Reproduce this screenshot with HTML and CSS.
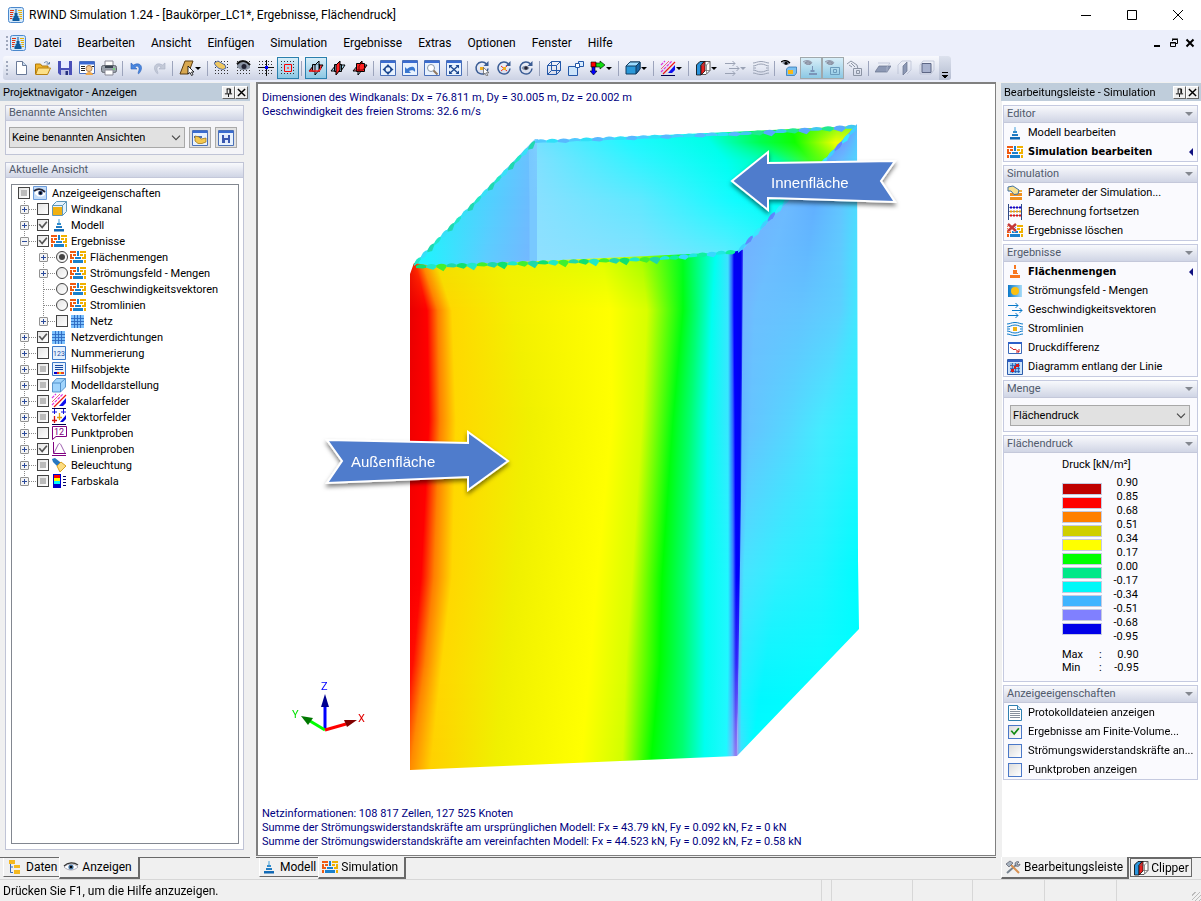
FILE: index.html
```
<!DOCTYPE html>
<html lang="de">
<head>
    <meta charset="UTF-8">
    <meta name="viewport" content="width=device-width, initial-scale=1.0">
    <title>RWIND Simulation 1.24</title>
    <link rel="stylesheet" href="styles.css">
</head>
<body>
    <!-- icon sprites -->
    <svg class="sprites" aria-hidden="true">
        <defs>
            <linearGradient id="gBlue" x1="0" y1="0" x2="0" y2="1"><stop offset="0" stop-color="#4aa8e0"/><stop offset="1" stop-color="#0b62b0"/></linearGradient>
            <linearGradient id="gFlow" x1="0" y1="0" x2="1" y2="0"><stop offset="0" stop-color="#0a78c8"/><stop offset="1" stop-color="#a8dcf8"/></linearGradient>
        </defs>
        <symbol id="app" viewBox="0 0 16 16"><rect x=".5" y=".5" width="15" height="15" rx="2" fill="#d4e8fa" stroke="#4a88cc"/><path d="M2 3.500h4M2 5.500h3.500M2 7.500h3M2 9.500h2.500M2 11.500h2" stroke="#e03010"/><path d="M10 3.500h4M10.500 5.500H14M11 7.500h3M11.500 9.500H14M12 11.500h2" stroke="#e8b000"/><path d="M7.500 2h1v4h1v3h1v2h1v3h-7v-3h1V9h1V6h1z" fill="#0f5a9c"/></symbol>
        <symbol id="model" viewBox="0 0 16 16"><path d="M7.500 2h1v4h-1zM6 6h4v2H6zM5 9h6v2H5zM3 12h10v2.500H3z" fill="url(#gBlue)"/></symbol>
        <symbol id="modelo" viewBox="0 0 16 16"><path d="M7 1h2v4H7zM6 6h4v3H6zM6 9h5v1H6zM3 11h10v3H3z" fill="#f87820"/></symbol>
        <symbol id="sim" viewBox="0 0 16 16"><path d="M0 2h6v2H0zM0 5h2v3H0zM3 5h3v2H3zM0 8h4v2H0zM0 11h2v3H0z" fill="#f05a10"/><path d="M10 2h6v2h-6zM10 5h3v2h-3zM14 5h2v3h-2zM12 8h4v2h-4zM14 11h2v3h-2z" fill="#f0b000"/><path d="M7 2h2v5H7zM5 8h6v2H5zM3 11h10v3H3z" fill="#1a80cc"/></symbol>
        <symbol id="new" viewBox="0 0 16 16"><path d="M3.500 1.500h6l4 4v9h-10z" fill="#fff" stroke="#6a7a98"/><path d="M9.500 1.500v4h4" fill="#c8dcf0" stroke="#6a7a98"/></symbol>
        <symbol id="open" viewBox="0 0 16 16"><path d="M.5 14V4h5l1.500 2h6v3" fill="#f0b428" stroke="#b07808"/><path d="M3 8h12.500l-3 6.500H.7z" fill="#fce088" stroke="#b88010"/><path d="M9 3c2-2 4-1.500 4.500 1m-2 0h3V2" fill="none" stroke="#6080a8"/></symbol>
        <symbol id="save" viewBox="0 0 16 16"><path d="M1 1h14v14H3l-2-2z" fill="#4a50b8"/><path d="M4 1h8v7H4z" fill="#e8ecff"/><path d="M4 10h8v5H4z" fill="#c0c4e8"/><path d="M8.500 11h2.500v4H8.500z" fill="#26307c"/></symbol>
        <symbol id="report" viewBox="0 0 16 16"><path d="M.5 1.500h15v12H.5z" fill="#fff" stroke="#4a70c0"/><path d="M1 2h14v2.500H1z" fill="#3a68d0"/><path d="M2 6.500h4M2 8.500h4M2 10.500h4M13 6.500h2" stroke="#222"/><circle cx="10" cy="8.500" r="3" fill="#f4c890" stroke="#b08050"/><path d="M6.500 15c0-4 7.500-4 7.500 0z" fill="#f0a848"/></symbol>
        <symbol id="print" viewBox="0 0 16 16"><path d="M4 6V1h8v5z" fill="#fff" stroke="#8a8a96"/><rect x=".5" y="5.500" width="15" height="7" rx="2" fill="#9aa2ac" stroke="#60666e"/><path d="M4 10h8v5H4z" fill="#fff" stroke="#8a8a96"/><path d="M4 6h8v2H4z" fill="#3a4450"/><path d="M12 9h2" stroke="#5f5"/></symbol>
        <symbol id="undo" viewBox="0 0 16 16"><path d="M2 3v6h6L5.800 7c2.500-2 6-.5 3.400 5.500-.5 1 .3 1.500 1 .8C15 8 12 1 4.400 5z" fill="#4a88e0" stroke="#2c60b8" stroke-width=".6"/></symbol>
        <symbol id="redo" viewBox="0 0 16 16"><path d="M14 3v6H8l2.200-2c-2.500-2-6-.5-3.400 5.500.5 1-.3 1.500-1 .8C1 8 4 1 11.600 5z" fill="#c4cad8" stroke="#a8b0c4" stroke-width=".6"/></symbol>
        <symbol id="pick" viewBox="0 0 16 16"><path d="M6 1h8l-5 13H1z" fill="#d8a850" stroke="#5a3c10"/><path d="M9 6v8l2-1.500 1.500 3 1.500-.8-1.500-2.700H15z" fill="#fff" stroke="#000" stroke-width=".8"/></symbol>
        <symbol id="dots" viewBox="0 0 16 16"><path d="M1 1.500h15M1 4.500h15M1 7.500h15M1 10.500h15M1 13.500h15" stroke="#333" stroke-dasharray="1 2"/></symbol>
        <symbol id="gridhand" viewBox="0 0 16 16"><use href="#dots"/><path d="M0 3l4-2 7 4 1 3-3 1.500-4-1L2 6z" fill="#f0c860" stroke="#3050a0" stroke-width=".8"/></symbol>
        <symbol id="grideye" viewBox="0 0 16 16"><use href="#dots"/><path d="M1 5c4-4 9-4 13 0v3l-4 2H5L1 7z" fill="#8a94a4"/><path d="M1 4c4-4 9-4 13 1" fill="none" stroke="#111" stroke-width="2"/><circle cx="8" cy="6.500" r="2.500" fill="#223"/></symbol>
        <symbol id="gridcross" viewBox="0 0 16 16"><use href="#dots"/><path d="M8.500 0v16M0 7.500h16" stroke="#111"/><path d="M7 6h3v3H7z" fill="#00f"/></symbol>
        <symbol id="gridsel" viewBox="0 0 16 16"><use href="#dots"/><path d="M3 3h10v10H3z" fill="#b8dcee"/><path d="M4.500 4.500h7v7h-7z" fill="#b8dcee" stroke="#f00"/><path d="M7 7h2v2H7z" fill="#f66"/></symbol>
        <symbol id="planeA" viewBox="0 0 16 16"><path d="M1 11l5-6h9l-4 6z" fill="#f44" stroke="#000"/><path d="M4.500 4.500h7v7h-7z" fill="#a8dcf4" fill-opacity=".8" stroke="#000"/><path d="M7 15V5l4-4v9z" fill="#a8dcf4" fill-opacity=".7" stroke="#000"/><path d="M1 11h10l2-3" fill="none" stroke="#f22" stroke-width="1.500"/></symbol>
        <symbol id="planeB" viewBox="0 0 16 16"><path d="M1 11l5-6h9l-4 6z" fill="#a8dcf4" stroke="#000"/><path d="M4.500 4.500h7v7h-7z" fill="#a8dcf4" fill-opacity=".7" stroke="#000"/><path d="M6 15V5l4-4v9z" fill="#f22" stroke="#000"/></symbol>
        <symbol id="planeC" viewBox="0 0 16 16"><path d="M1 11l5-6h9l-4 6z" fill="#a8dcf4" stroke="#000"/><path d="M6 15V5l4-4v9z" fill="#a8dcf4" stroke="#000"/><path d="M4.500 3.500h8v8h-8z" fill="#f22" stroke="#000"/><path d="M7 12V6l3-4M2 10h9l3-4" fill="none" stroke="#700"/></symbol>
        <symbol id="win" viewBox="0 0 16 16"><path d="M.5 .5h15v15H.5z" fill="#e8f2fe" stroke="#4a70b8"/><path d="M1 1h14v2H1z" fill="#3a6cd0"/></symbol>
        <symbol id="target" viewBox="0 0 16 16"><use href="#win"/><circle cx="8" cy="9.500" r="3" fill="none" stroke="#1c4890" stroke-width="1.300"/><path d="M8 4l2 2.500H6zM8 15l2-2.500H6zM2.500 9.500L5 7.500v4zM13.500 9.500L11 7.500v4z" fill="#1c4890"/></symbol>
        <symbol id="winundo" viewBox="0 0 16 16"><use href="#win"/><path d="M3 7v6h6l-2-2c2-1 5-1 6 1 1-5-3-7-8-3z" fill="#3a78d0"/></symbol>
        <symbol id="winzoom" viewBox="0 0 16 16"><use href="#win"/><circle cx="7" cy="8" r="3.500" fill="#fff" stroke="#8898a8"/><path d="M9.500 10.500l4 4" stroke="#907860" stroke-width="2"/></symbol>
        <symbol id="winfit" viewBox="0 0 16 16"><use href="#win"/><path d="M4 6l8 7M12 6l-8 7" stroke="#1c4890" stroke-width="1.300"/><path d="M3 5h3.500L3 8.500zM13 5H9.500L13 8.500zM3 14h3.500L3 10.500zM13 14H9.500l3.500-3.500z" fill="#1c4890"/></symbol>
        <symbol id="turn" viewBox="0 0 16 16"><path d="M12.500 4A6 6 0 1 0 14 8.500" fill="none" stroke="#3a5c94" stroke-width="1.500"/><path d="M14.500 1v5h-5z" fill="#3a5c94"/></symbol>
        <symbol id="turnpick" viewBox="0 0 16 16"><use href="#turn"/><path d="M6 7h4v3H6z" fill="#f0b020"/><path d="M9.500 7.500v7l1.600-1.300L12.500 16l1.300-.7-1.400-2.600H15z" fill="#fff" stroke="#555" stroke-width=".7"/></symbol>
        <symbol id="turnx" viewBox="0 0 16 16"><use href="#turn"/><path d="M5 6l6 5M11 6l-6 5" stroke="#f03020"/><path d="M7 7h3v3H7z" fill="#f0b020"/></symbol>
        <symbol id="turneye" viewBox="0 0 16 16"><use href="#turn"/><path d="M3.500 8c2-3 6-3 8 0-2 3-6 3-8 0z" fill="#8a96ac"/><circle cx="8" cy="8" r="1.800" fill="#223"/></symbol>
        <symbol id="wire" viewBox="0 0 16 16"><path d="M1.500 5.500h9v9h-9zM5.500 1.500h9v9h-9zM1.500 5.500l4-4M10.500 5.500l4-4M1.500 14.500l4-4M10.500 14.500l4-4" fill="none" stroke="#2458a8"/></symbol>
        <symbol id="cubes" viewBox="0 0 16 16"><path d="M.5 6.500h9v9h-9z" fill="#cce4fa" stroke="#2458a8"/><path d="M10.500 1.500h5v5h-5z" fill="#d8ecff" stroke="#2458a8"/><path d="M7.500 3.500h4v4h-4z" fill="#fff" stroke="#2458a8"/></symbol>
        <symbol id="axes" viewBox="0 0 16 16"><path d="M1 2h5v5H1z" fill="#f00" stroke="#000" stroke-width=".6"/><path d="M6 3h4V1l5 4-5 4V7H6z" fill="#1d1" stroke="#000" stroke-width=".6"/><path d="M2 7h3v4h2l-3.500 4L0 11h2z" fill="#00f" stroke="#000" stroke-width=".6"/></symbol>
        <symbol id="bcube" viewBox="0 0 16 16"><path d="M1 6l4-4h10v7l-4 5H1z" fill="#2a98d8" stroke="#123c60"/><path d="M1 6l4-4h10l-4 4z" fill="#9cdcff" stroke="#123c60"/><path d="M11 6l4-4v7l-4 5z" fill="#1868a8" stroke="#123c60"/></symbol>
        <symbol id="hatch" viewBox="0 0 16 16"><path d="M1 5l4-4M1 12L12 1" stroke="#e030e0" stroke-width="1.200" stroke-dasharray="3 1"/><path d="M3 14L15 2" stroke="#f01818" stroke-width="1.200"/><path d="M1 9l8-8" stroke="#f04060" stroke-width=".8"/><path d="M8 13l7-8v5l-3 3z" fill="#1010f0"/><path d="M1 15.500h14" stroke="#000050"/></symbol>
        <symbol id="clip" viewBox="0 0 16 16"><path d="M5 1.500h10v9l-4 4H1.500V5z" fill="#fff" stroke="#333" stroke-width=".8"/><path d="M1.500 5L5 1.500h4L6 5v10H1.500z" fill="#2a94dc" stroke="#111" stroke-width=".8"/><path d="M6 5l4-4v10l-4 4z" fill="#e82020" stroke="#111" stroke-width=".8"/><path d="M10 10.500h5M11.500 5v9M11.500 5L15 1.500M6 5h5.500" stroke="#666" stroke-width=".7" fill="none"/></symbol>
        <symbol id="vec" viewBox="0 0 16 16"><path d="M1 3.500h10M5 8.500h10M1 13.500h10M8.500 1l2.500 2.500L8.500 6M12.500 6L15 8.500 12.500 11M8.500 11l2.500 2.500L8.500 16" fill="none" stroke="currentColor"/></symbol>
        <symbol id="stream" viewBox="0 0 16 16"><path d="M0 3c3 0 4-1.500 8-1.500S13 3 16 3M0 6c3 0 4-2 8-2s5 2 8 2M0 10c3 0 4 2 8 2s5-2 8-2M0 13c3 0 4 1.500 8 1.500S13 13 16 13M0 8h3M13 8h3" fill="none" stroke="currentColor"/></symbol>
        <symbol id="streamc" viewBox="0 0 16 16"><use href="#stream"/><path d="M6 6h4v4H6z" fill="#f0b010"/></symbol>
        <symbol id="eyes" viewBox="0 0 16 16"><path d="M1 3c3-3 6-3 8 0L7 5H4z" fill="#8890a0"/><path d="M0 2c3-2 6-2 9 1" stroke="currentColor" stroke-width="1.300" fill="none"/><circle cx="5" cy="3.200" r="1.500" fill="currentColor"/></symbol>
        <symbol id="eyebox" viewBox="0 0 16 16"><use href="#eyes"/><path d="M5.500 9l2-2h8v6l-2 2.500h-8z" fill="#7cc0f0" stroke="#246cac" stroke-width=".7"/><path d="M7 10h5v4H7z" fill="#f8b818"/></symbol>
        <symbol id="eyemodel" viewBox="0 0 16 16"><use href="#eyes"/><path d="M9 6h1v4H9zM7.500 10h4v2h-4zM6 13h8v2H6z" fill="#7a94b8"/></symbol>
        <symbol id="eyesq" viewBox="0 0 16 16"><use href="#eyes"/><path d="M5.500 7.500h9v7h-9zM8.500 9.500h3v3h-3z" fill="none" stroke="#6c9cbc"/></symbol>
        <symbol id="handsq" viewBox="0 0 16 16"><path d="M0 4l4-3 6 4 1 4M2 5l3 2M4 3l4 4" fill="none" stroke="#8c94a4"/><path d="M6.500 8.500h8v7h-8zM9.500 10.500h3v3h-3z" fill="none" stroke="#8c94a4"/></symbol>
        <symbol id="flatz" viewBox="0 0 16 16"><path d="M0 12l4-6h12l-4 6z" fill="#8c98b4" stroke="#68728c" stroke-width=".7"/><path d="M3 3h12l-3 4v6" fill="none" stroke="#b4bcd0" stroke-width=".7"/></symbol>
        <symbol id="flatx" viewBox="0 0 16 16"><path d="M6 6l4-4v9l-4 4z" fill="#8c98b4" stroke="#68728c" stroke-width=".7"/><path d="M1 14V5l4-4h9v9l-4 4" fill="none" stroke="#b4bcd0" stroke-width=".7"/></symbol>
        <symbol id="flaty" viewBox="0 0 16 16"><path d="M3 3.500h9v9H3z" fill="#a8b2ce" stroke="#5c6684"/><path d="M1 14V5l3-4h11v9l-3 4z" fill="none" stroke="#b4bcd0" stroke-width=".7"/></symbol>
        <symbol id="eye" viewBox="0 0 16 16"><path d="M1.500 1.500h13v13h-13z" fill="#c4dcf8" stroke="#6c9cdc"/><path d="M3 7c3-3 7-3 10 0v3l-3 1.500H6L3 9z" fill="#fff"/><path d="M2 6c4-3 8-2 11 1" stroke="#223" stroke-width="1.800" fill="none"/><circle cx="8.500" cy="8" r="2.300" fill="#2c4880"/><circle cx="8.500" cy="8" r="1.200" fill="#000"/></symbol>
        <symbol id="eyetab" viewBox="0 0 16 16"><path d="M1 8c4-4 10-4 14 0-4 4-10 4-14 0z" fill="#fff" stroke="#99a" stroke-width=".8"/><path d="M1 7c4-4 10-4 14-1" stroke="#333" stroke-width="1.200" fill="none"/><circle cx="8" cy="8" r="2.600" fill="#4878a8"/><circle cx="8" cy="8" r="1.300" fill="#000"/></symbol>
        <symbol id="windbox" viewBox="0 0 16 16"><path d="M1.500 4.500l4-4h10v10l-4 4h-10z" fill="#e4f2fc" stroke="#6098b8"/><path d="M1.500 4.500h10v10M11.500 4.500l4-4" fill="none" stroke="#6098b8"/><path d="M2 6h9v8H2z" fill="#f0b010"/></symbol>
        <symbol id="mesh" viewBox="0 0 16 16"><path d="M1 2h13v13H1z" fill="#7cc0fc"/><path d="M4.500 2v13M7.500 2v13M10.500 2v13M1 5.500h13M1 8.500h13M1 11.500h13" stroke="#2c68c0" stroke-width=".9"/></symbol>
        <symbol id="num" viewBox="0 0 16 16"><path d="M1.500 1.500h13v13h-13z" fill="#e4f0fe" stroke="#3c78c8"/><text x="8" y="11" font-size="7" text-anchor="middle" fill="#1848a0">123</text></symbol>
        <symbol id="help" viewBox="0 0 16 16"><path d="M1.500 1.500h13v13h-13z" fill="#e4f0fe" stroke="#3c78c8"/><path d="M4 4.500h8M4 6.500h8M4 8.500h8" stroke="#1848a0"/><path d="M3 11h3v2H3z" fill="#00c"/><path d="M6 11h2v2H6z" fill="#e22"/><path d="M8 11h2v2H8z" fill="#fc0"/><path d="M10 11h3v2h-3z" fill="#e42"/></symbol>
        <symbol id="cube" viewBox="0 0 16 16"><path d="M1.500 6l4-4.500h9V10l-5 5h-8z" fill="#a0d4fc" stroke="#3c80c0" stroke-width=".8"/><path d="M1.500 6h8v9M9.500 6l5-4.500" fill="none" stroke="#3c80c0" stroke-width=".8"/></symbol>
        <symbol id="vfield" viewBox="0 0 16 16"><path d="M3.500 0v5M1 3h5M12.500 0v5M10 3h5" stroke="#1010e0"/><path d="M3.500 7v7M1 11.500h5" stroke="#d81010" stroke-width="1.300"/><path d="M8.500 4v7M6 8.500h5" stroke="#e0a010" stroke-width="1.300"/><path d="M9 13l6-7v4l-3 3z" fill="#0000e0"/><path d="M1 15.500h14" stroke="#000050"/></symbol>
        <symbol id="point" viewBox="0 0 16 16"><path d="M1.500 1.500h14v10H5l-3.500 3z" fill="#fff" stroke="#800080"/><text x="8" y="10" font-size="9" text-anchor="middle" fill="#800080">12</text></symbol>
        <symbol id="line" viewBox="0 0 16 16"><path d="M2.500 1v11.500H15M1 14.500h14" fill="none" stroke="#800080"/><path d="M3 12l4-8c1-2 2-2 3 0l4 8" fill="none" stroke="#a060b0"/></symbol>
        <symbol id="light" viewBox="0 0 16 16"><path d="M1 2l3-1 5 4 0 3-3 1-4-4z" fill="#2878c0"/><path d="M6 9l4-4 5 4-6 6z" fill="#fcdc80" stroke="#d8a020"/></symbol>
        <symbol id="scale" viewBox="0 0 16 16"><path d="M2 1h8v14H2z" fill="#00c"/><path d="M3 2h6v3H3z" fill="#f00"/><path d="M3 5h6v3H3z" fill="#ff0"/><path d="M3 8h6v3H3z" fill="#0ff"/><path d="M12 3.500h3M12 6.500h3M12 9.500h3M12 12.500h3" stroke="#00006c"/></symbol>
        <symbol id="param" viewBox="0 0 16 16"><path d="M3 8h12v3H3zM3 12h12v3H3z" fill="#f09020"/><path d="M10 5h5v2h-5z" fill="#f0b040"/><path d="M1 2l5-1 6 4-1 4-4 .5L4 6 1 6z" fill="#f8e090" stroke="#4070a0"/></symbol>
        <symbol id="abacus" viewBox="0 0 16 16"><path d="M1.500 0v16M14.500 0v16" stroke="#2c4888"/><path d="M2 3.500h12M2 7.500h12M2 11.500h12" stroke="#889"/><path d="M3 3.500h11" stroke="#10c" stroke-width="2" stroke-dasharray="2 1"/><path d="M3 7.500h11" stroke="#e8a010" stroke-width="2" stroke-dasharray="2 1"/><path d="M3 11.500h11" stroke="#d11" stroke-width="2" stroke-dasharray="2 1"/></symbol>
        <symbol id="del" viewBox="0 0 16 16"><use href="#sim"/><path d="M1 1l8 7M9 1L1 8" stroke="#fff" stroke-width="4"/><path d="M1 1l8 7M9 1L1 8" stroke="#c43838" stroke-width="2.500"/></symbol>
        <symbol id="flow" viewBox="0 0 16 16"><path d="M1 2h14v12H1z" fill="url(#gFlow)"/><circle cx="8" cy="8" r="4" fill="#fcc010"/></symbol>
        <symbol id="diff" viewBox="0 0 16 16"><path d="M1.500 2.500h13v11h-13z" fill="#fff" stroke="#3868b8"/><path d="M1 2h14v2H1z" fill="#2c60c8"/><path d="M3 7l3 2 1 1 1-1 4 3m0-3v3H9" fill="none" stroke="#d02020"/></symbol>
        <symbol id="diagram" viewBox="0 0 16 16"><path d="M.5 .5h15v15H.5z" fill="#cfe4fa" stroke="#2c5cac"/><path d="M1 1h14v2H1z" fill="#2c5cc8"/><path d="M3 4h10v10H3z" fill="#8cc0f0"/><path d="M5.500 4v10M8.500 4v10M11.500 4v10M3 6.500h10M3 9.500h10M3 12.500h10" stroke="#1c50a8" stroke-width=".7"/><path d="M4 10h3v3H4zM7 7h2v3H7zM9 5h3v3H9z" fill="#d81818"/></symbol>
        <symbol id="doc" viewBox="0 0 16 16"><path d="M1.500 .5h9l4 4v11h-13z" fill="#fff" stroke="#3080b0"/><path d="M10.500 .5v4h4" fill="#d0e8f8" stroke="#3080b0"/><path d="M3 4.500h6M3 6.500h10M3 8.500h10M3 10.500h10M3 12.500h10" stroke="#88909c"/></symbol>
        <symbol id="data" viewBox="0 0 16 16"><path d="M2 1h6v4H2zM7 6h6v3H7zM7 11h6v4H7z" fill="#f4b820"/><path d="M3.500 5v8.500H6M3.500 8H6" fill="none" stroke="#3868b8"/></symbol>
        <symbol id="tools" viewBox="0 0 16 16"><path d="M2 14l9-8" stroke="#788490" stroke-width="2"/><path d="M14 14L6 6" stroke="#d89050" stroke-width="2"/><path d="M1 5l4-3 3 2-4 4z" fill="#a8b4c0" stroke="#445" stroke-width=".6"/><path d="M10 5c0-2 2-3 4-2l-2 2 1 1 2-1c0 2-2 3-4 2z" fill="#a8b4c0" stroke="#445" stroke-width=".6"/></symbol>
        <symbol id="viewopen" viewBox="0 0 16 16"><use href="#win"/><path d="M2 6h8v2H2z" fill="#4a70b8"/><path d="M3 6l4 1 2 2 5-1v4l-4 1.500H6L3 11z" fill="#f4c850" stroke="#9a7010" stroke-width=".7"/></symbol>
        <symbol id="viewsave" viewBox="0 0 16 16"><use href="#win"/><path d="M4 5h8v8H4z" fill="#3a58b0"/><path d="M6 5h4v3H6zM7 10h3v3H7z" fill="#dfe8fc"/></symbol>
        <symbol id="chev" viewBox="0 0 10 6"><path d="M1 .7l4 4 4-4" fill="none" stroke="#444" stroke-width="1.100"/></symbol>
        <symbol id="pin" viewBox="0 0 10 10"><path d="M3 1h4M3.500 1v5M6.500 1v5M7.300 1v5M1 6.500h8M5 6.500V10" fill="none" stroke="#000"/></symbol>
        <symbol id="x" viewBox="0 0 10 10"><path d="M1 1l8 8M9 1L1 9" stroke="#000" stroke-width="1.600"/></symbol>
    </svg>

    <header class="titlebar">
        <svg class="icon"><use href="#app"/></svg>
        <span class="title">RWIND Simulation 1.24 - [Baukörper_LC1*, Ergebnisse, Flächendruck]</span>
        <div class="window-buttons">
            <button aria-label="Minimieren"><svg viewBox="0 0 12 12"><path d="M1 6.500h10" stroke="#000"/></svg></button>
            <button aria-label="Maximieren"><svg viewBox="0 0 12 12"><path d="M1.500 1.500h9v9h-9z" fill="none" stroke="#000"/></svg></button>
            <button aria-label="Schließen"><svg viewBox="0 0 12 12"><path d="M1 1l10 10M11 1L1 11" stroke="#000"/></svg></button>
        </div>
    </header>

    <nav class="menubar">
        <span class="grip"></span>
        <svg class="icon"><use href="#app"/></svg>
        <a href="#">Datei</a>
        <a href="#">Bearbeiten</a>
        <a href="#">Ansicht</a>
        <a href="#">Einfügen</a>
        <a href="#">Simulation</a>
        <a href="#">Ergebnisse</a>
        <a href="#">Extras</a>
        <a href="#">Optionen</a>
        <a href="#">Fenster</a>
        <a href="#">Hilfe</a>
        <div class="mdi-buttons">
            <button aria-label="Minimieren"><svg viewBox="0 0 10 10"><path d="M1 8h6" stroke="#000" stroke-width="2"/></svg></button>
            <button aria-label="Wiederherstellen"><svg viewBox="0 0 10 10"><path d="M3.500 3V1.500h5v4H7M1.500 4.500h5v4h-5zM1 5h6M3 1h6" fill="none" stroke="#000"/></svg></button>
            <button aria-label="Schließen"><svg viewBox="0 0 10 10"><path d="M1.500 1.500l7 7M8.500 1.500l-7 7" stroke="#000" stroke-width="2"/></svg></button>
        </div>
    </nav>

    <div class="toolbar-row">
        <div class="toolbar">
            <span class="grip"></span>
            <button aria-label="Neu"><svg class="icon"><use href="#new"/></svg></button>
            <button aria-label="Öffnen"><svg class="icon"><use href="#open"/></svg></button>
            <button aria-label="Speichern"><svg class="icon"><use href="#save"/></svg></button>
            <button aria-label="Protokoll"><svg class="icon"><use href="#report"/></svg></button>
            <button aria-label="Drucken"><svg class="icon"><use href="#print"/></svg></button>
            <span class="sep"></span>
            <button aria-label="Rückgängig"><svg class="icon"><use href="#undo"/></svg></button>
            <button aria-label="Wiederholen"><svg class="icon"><use href="#redo"/></svg></button>
            <span class="sep"></span>
            <button class="drop" aria-label="Auswahl"><svg class="icon"><use href="#pick"/></svg></button>
            <span class="sep"></span>
            <button aria-label="Raster bearbeiten"><svg class="icon"><use href="#gridhand"/></svg></button>
            <button aria-label="Raster anzeigen"><svg class="icon"><use href="#grideye"/></svg></button>
            <button aria-label="Fadenkreuz"><svg class="icon"><use href="#gridcross"/></svg></button>
            <button class="active" aria-label="Rasterfang"><svg class="icon"><use href="#gridsel"/></svg></button>
            <span class="sep"></span>
            <button class="active" aria-label="Ebene XY"><svg class="icon"><use href="#planeA"/></svg></button>
            <button aria-label="Ebene YZ"><svg class="icon"><use href="#planeB"/></svg></button>
            <button aria-label="Ebene XZ"><svg class="icon"><use href="#planeC"/></svg></button>
            <span class="sep"></span>
            <button aria-label="Zentrieren"><svg class="icon"><use href="#target"/></svg></button>
            <button aria-label="Vorige Ansicht"><svg class="icon"><use href="#winundo"/></svg></button>
            <button aria-label="Zoom"><svg class="icon"><use href="#winzoom"/></svg></button>
            <button aria-label="Alles zeigen"><svg class="icon"><use href="#winfit"/></svg></button>
            <span class="sep"></span>
            <button aria-label="Drehen um Punkt"><svg class="icon"><use href="#turnpick"/></svg></button>
            <button aria-label="Drehen um Mitte"><svg class="icon"><use href="#turnx"/></svg></button>
            <button aria-label="Drehen um Auge"><svg class="icon"><use href="#turneye"/></svg></button>
            <span class="sep"></span>
            <button aria-label="Drahtmodell"><svg class="icon"><use href="#wire"/></svg></button>
            <button aria-label="Perspektive"><svg class="icon"><use href="#cubes"/></svg></button>
            <button class="drop" aria-label="Achsen"><svg class="icon"><use href="#axes"/></svg></button>
            <span class="sep"></span>
            <button class="drop" aria-label="Volumenmodell"><svg class="icon"><use href="#bcube"/></svg></button>
            <span class="sep"></span>
            <button class="drop" aria-label="Skalarfelder"><svg class="icon"><use href="#hatch"/></svg></button>
            <span class="sep"></span>
            <button class="drop" aria-label="Clipper"><svg class="icon"><use href="#clip"/></svg></button>
            <button class="drop off" aria-label="Vektoren"><svg class="icon"><use href="#vec"/></svg></button>
            <button class="off" aria-label="Stromlinien"><svg class="icon"><use href="#stream"/></svg></button>
            <span class="sep"></span>
            <button aria-label="Windkanal"><svg class="icon"><use href="#eyebox"/></svg></button>
            <button class="active off" aria-label="Modell"><svg class="icon"><use href="#eyemodel"/></svg></button>
            <button class="active off" aria-label="Flächen"><svg class="icon"><use href="#eyesq"/></svg></button>
            <button class="off" aria-label="Bearbeiten"><svg class="icon"><use href="#handsq"/></svg></button>
            <span class="sep"></span>
            <button aria-label="Ansicht Z"><svg class="icon"><use href="#flatz"/></svg></button>
            <button aria-label="Ansicht X"><svg class="icon"><use href="#flatx"/></svg></button>
            <button aria-label="Ansicht Y"><svg class="icon"><use href="#flaty"/></svg></button>
            <button class="overflow" aria-label="Weitere Schaltflächen"></button>
        </div>
    </div>

    <main class="workspace">
        <aside class="navigator">
            <div class="panel-title">
                <h2>Projektnavigator - Anzeigen</h2>
                <button aria-label="Anheften"><svg><use href="#pin"/></svg></button>
                <button aria-label="Schließen"><svg><use href="#x"/></svg></button>
            </div>
            <section class="box">
                <h3>Benannte Ansichten</h3>
                <div class="named-views">
                    <div class="combo">
                        <select aria-label="Benannte Ansichten"><option>Keine benannten Ansichten</option></select>
                        <svg><use href="#chev"/></svg>
                    </div>
                    <button aria-label="Ansicht bearbeiten"><svg class="icon"><use href="#viewopen"/></svg></button>
                    <button aria-label="Ansicht speichern"><svg class="icon"><use href="#viewsave"/></svg></button>
                </div>
            </section>
            <section class="box fill">
                <h3>Aktuelle Ansicht</h3>
                <div class="tree">
                    <label class="node"><input type="checkbox" class="mixed"><svg class="icon"><use href="#eye"/></svg>Anzeigeeigenschaften</label>
                    <ul>
                        <li><div class="row"><button class="twig" aria-label="Aufklappen"></button><label class="node"><input type="checkbox"><svg class="icon"><use href="#windbox"/></svg>Windkanal</label></div></li>
                        <li><div class="row"><button class="twig" aria-label="Aufklappen"></button><label class="node"><input type="checkbox" checked><svg class="icon"><use href="#model"/></svg>Modell</label></div></li>
                        <li><div class="row"><button class="twig expanded" aria-label="Zuklappen"></button><label class="node"><input type="checkbox" checked><svg class="icon"><use href="#sim"/></svg>Ergebnisse</label></div>
                            <ul>
                                <li><div class="row"><button class="twig" aria-label="Aufklappen"></button><label class="node"><input type="radio" name="result" checked><svg class="icon"><use href="#sim"/></svg>Flächenmengen</label></div></li>
                                <li><div class="row"><button class="twig" aria-label="Aufklappen"></button><label class="node"><input type="radio" name="result"><svg class="icon"><use href="#sim"/></svg>Strömungsfeld - Mengen</label></div></li>
                                <li><div class="row"><span class="twig leaf"></span><label class="node"><input type="radio" name="result"><svg class="icon"><use href="#sim"/></svg>Geschwindigkeitsvektoren</label></div></li>
                                <li><div class="row"><span class="twig leaf"></span><label class="node"><input type="radio" name="result"><svg class="icon"><use href="#sim"/></svg>Stromlinien</label></div></li>
                                <li><div class="row"><button class="twig" aria-label="Aufklappen"></button><label class="node"><input type="checkbox"><svg class="icon"><use href="#mesh"/></svg>Netz</label></div></li>
                            </ul>
                        </li>
                        <li><div class="row"><button class="twig" aria-label="Aufklappen"></button><label class="node"><input type="checkbox" checked><svg class="icon"><use href="#mesh"/></svg>Netzverdichtungen</label></div></li>
                        <li><div class="row"><button class="twig" aria-label="Aufklappen"></button><label class="node"><input type="checkbox"><svg class="icon"><use href="#num"/></svg>Nummerierung</label></div></li>
                        <li><div class="row"><button class="twig" aria-label="Aufklappen"></button><label class="node"><input type="checkbox" class="mixed"><svg class="icon"><use href="#help"/></svg>Hilfsobjekte</label></div></li>
                        <li><div class="row"><button class="twig" aria-label="Aufklappen"></button><label class="node"><input type="checkbox" class="mixed"><svg class="icon"><use href="#cube"/></svg>Modelldarstellung</label></div></li>
                        <li><div class="row"><button class="twig" aria-label="Aufklappen"></button><label class="node"><input type="checkbox" class="mixed"><svg class="icon"><use href="#hatch"/></svg>Skalarfelder</label></div></li>
                        <li><div class="row"><button class="twig" aria-label="Aufklappen"></button><label class="node"><input type="checkbox" class="mixed"><svg class="icon"><use href="#vfield"/></svg>Vektorfelder</label></div></li>
                        <li><div class="row"><button class="twig" aria-label="Aufklappen"></button><label class="node"><input type="checkbox"><svg class="icon"><use href="#point"/></svg>Punktproben</label></div></li>
                        <li><div class="row"><button class="twig" aria-label="Aufklappen"></button><label class="node"><input type="checkbox" checked><svg class="icon"><use href="#line"/></svg>Linienproben</label></div></li>
                        <li><div class="row"><button class="twig" aria-label="Aufklappen"></button><label class="node"><input type="checkbox" class="mixed"><svg class="icon"><use href="#light"/></svg>Beleuchtung</label></div></li>
                        <li><div class="row"><button class="twig" aria-label="Aufklappen"></button><label class="node"><input type="checkbox" class="mixed"><svg class="icon"><use href="#scale"/></svg>Farbskala</label></div></li>
                    </ul>
                </div>
            </section>
            <div class="tabs">
                <button class="tab"><svg class="icon"><use href="#data"/></svg>Daten</button>
                <button class="tab current"><svg class="icon"><use href="#eyetab"/></svg>Anzeigen</button>
            </div>
        </aside>

        <section class="center">
            <div class="viewport">
                <p>Dimensionen des Windkanals: Dx = 76.811 m, Dy = 30.005 m, Dz = 20.002 m<br>Geschwindigkeit des freien Stroms: 32.6 m/s</p>
                <div class="scene">
                    <canvas id="building" width="712" height="680"></canvas>
                    <svg class="overlay" viewBox="270 110 712 680">
                        <defs>
                            <filter id="shadow" x="-10%" y="-20%" width="120%" height="150%"><feDropShadow dx="0" dy="3" stdDeviation="2" flood-color="#000" flood-opacity=".5"/></filter>
                        </defs>
                        <g class="callout" filter="url(#shadow)">
                            <path d="M732 181L768 152V163L895 161L881 181L895 202L768 198V210Z"/>
                            <path d="M508 461L468 432V443L327 440L342 461L327 483L468 477V490Z"/>
                        </g>
                        <g class="callout-text">
                            <text x="771" y="188">Innenfläche</text>
                            <text x="351" y="467">Außenfläche</text>
                        </g>
                        <g class="axis">
                            <path d="M325 730V704" stroke="#0000ff"/><path d="M325 694l4 13h-8z" fill="#000090"/>
                            <path d="M325 730L310 721" stroke="#00ff00"/><path d="M301 716l12 2-5 7z" fill="#007800"/>
                            <path d="M325 730L346 724" stroke="#ff0000"/><path d="M357 720l-13 0 3 7z" fill="#800000"/>
                            <text x="321" y="690" fill="#0000ff">Z</text>
                            <text x="292" y="718" fill="#00e000">Y</text>
                            <text x="358" y="722" fill="#e00000">X</text>
                        </g>
                    </svg>
                </div>
                <p>Netzinformationen: 108 817 Zellen, 127 525 Knoten<br>Summe der Strömungswiderstandskräfte am ursprünglichen Modell: Fx = 43.79 kN, Fy = 0.092 kN, Fz = 0 kN<br>Summe der Strömungswiderstandskräfte am vereinfachten Modell: Fx = 44.523 kN, Fy = 0.092 kN, Fz = 0.58 kN</p>
            </div>
            <div class="tabs">
                <button class="tab"><svg class="icon"><use href="#model"/></svg>Modell</button>
                <button class="tab current"><svg class="icon"><use href="#sim"/></svg>Simulation</button>
            </div>
        </section>

        <aside class="taskbar">
            <div class="panel-title">
                <h2>Bearbeitungsleiste - Simulation</h2>
                <button aria-label="Anheften"><svg><use href="#pin"/></svg></button>
                <button aria-label="Schließen"><svg><use href="#x"/></svg></button>
            </div>
            <div class="groups">
                <section class="group">
                    <h3>Editor</h3>
                    <a href="#"><svg class="icon"><use href="#model"/></svg>Modell bearbeiten</a>
                    <a href="#" class="selected"><svg class="icon"><use href="#sim"/></svg>Simulation bearbeiten</a>
                </section>
                <section class="group">
                    <h3>Simulation</h3>
                    <a href="#"><svg class="icon"><use href="#param"/></svg>Parameter der Simulation...</a>
                    <a href="#"><svg class="icon"><use href="#abacus"/></svg>Berechnung fortsetzen</a>
                    <a href="#"><svg class="icon"><use href="#del"/></svg>Ergebnisse löschen</a>
                </section>
                <section class="group">
                    <h3>Ergebnisse</h3>
                    <a href="#" class="selected"><svg class="icon"><use href="#modelo"/></svg>Flächenmengen</a>
                    <a href="#"><svg class="icon"><use href="#flow"/></svg>Strömungsfeld - Mengen</a>
                    <a href="#"><svg class="icon"><use href="#vec"/></svg>Geschwindigkeitsvektoren</a>
                    <a href="#"><svg class="icon"><use href="#streamc"/></svg>Stromlinien</a>
                    <a href="#"><svg class="icon"><use href="#diff"/></svg>Druckdifferenz</a>
                    <a href="#"><svg class="icon"><use href="#diagram"/></svg>Diagramm entlang der Linie</a>
                </section>
                <section class="group">
                    <h3>Menge</h3>
                    <div class="combo">
                        <select aria-label="Menge"><option>Flächendruck</option></select>
                        <svg><use href="#chev"/></svg>
                    </div>
                </section>
                <section class="group">
                    <h3>Flächendruck</h3>
                    <div class="legend">
                        <p>Druck [kN/m²]</p>
                        <div class="legend-scale">
                            <ul class="swatches">
                                <li class="c1"></li><li class="c2"></li><li class="c3"></li><li class="c4"></li><li class="c5"></li><li class="c6"></li>
                                <li class="c7"></li><li class="c8"></li><li class="c9"></li><li class="c10"></li><li class="c11"></li>
                            </ul>
                            <ul class="values">
                                <li>0.90</li><li>0.85</li><li>0.68</li><li>0.51</li><li>0.34</li><li>0.17</li>
                                <li>0.00</li><li>-0.17</li><li>-0.34</li><li>-0.51</li><li>-0.68</li><li>-0.95</li>
                            </ul>
                        </div>
                        <table>
                            <tr><th>Max</th><td>:</td><td>0.90</td></tr>
                            <tr><th>Min</th><td>:</td><td>-0.95</td></tr>
                        </table>
                    </div>
                </section>
                <section class="group">
                    <h3>Anzeigeeigenschaften</h3>
                    <a href="#"><svg class="icon"><use href="#doc"/></svg>Protokolldateien anzeigen</a>
                    <label><input type="checkbox" checked>Ergebnisse am Finite-Volume...</label>
                    <label><input type="checkbox">Strömungswiderstandskräfte an...</label>
                    <label><input type="checkbox">Punktproben anzeigen</label>
                </section>
            </div>
            <div class="tabs">
                <button class="tab current"><svg class="icon"><use href="#tools"/></svg>Bearbeitungsleiste</button>
                <button class="tab boxed"><svg class="icon"><use href="#clip"/></svg>Clipper</button>
            </div>
        </aside>
    </main>

    <footer class="statusbar">
        <span class="message">Drücken Sie F1, um die Hilfe anzuzeigen.</span>
        <span class="cell tiny"></span>
        <span class="cell"></span>
        <span class="cell small"></span>
        <span class="cell"></span>
        <span class="cell"></span>
        <span class="cell"></span>
    </footer>
    <script src="script.js"></script>
</body>
</html>
```
FILE: styles.css
```
* {
    box-sizing: border-box;
}

body {
    margin: 0;
    height: 100vh;
    display: flex;
    flex-direction: column;
    background-color: #f0f0f0;
    color: #000;
    font-family: Roboto, "DejaVu Sans Condensed", sans-serif;
    font-size: 11px;
    overflow: hidden;
}

h2, h3, p, ul {
    margin: 0;
    padding: 0;
    font-size: inherit;
    font-weight: normal;
    list-style: none;
}

a {
    color: inherit;
    text-decoration: none;
}

button {
    margin: 0;
    padding: 0;
    border: none;
    background: none;
    color: inherit;
    font: inherit;
    display: flex;
    align-items: center;
    justify-content: center;
}

.sprites {
    position: absolute;
    width: 0;
    height: 0;
}

.icon {
    width: 16px;
    height: 16px;
    flex: none;
}

.titlebar,
.menubar,
.tab,
.statusbar {
    font-size: 12px;
}

/* title and menu */
.titlebar {
    flex: none;
    height: 30px;
    padding-left: 8px;
    display: flex;
    align-items: center;
    gap: 5px;
    background-color: #fff;
}

.window-buttons {
    margin-left: auto;
    display: flex;
}

.window-buttons button {
    width: 46px;
    height: 30px;
}

.window-buttons svg {
    width: 12px;
    height: 12px;
}

.menubar {
    flex: none;
    height: 26px;
    padding: 0 6px;
    display: flex;
    align-items: center;
    background-color: #eceffb;
}

.menubar a {
    padding: 0 8px;
}

.grip {
    width: 2px;
    height: 15px;
    margin-right: 2px;
    background: repeating-linear-gradient(#a0a8bc 0 2px, transparent 2px 4px);
}

.mdi-buttons {
    margin-left: auto;
    display: flex;
    gap: 6px;
}

.mdi-buttons svg {
    width: 10px;
    height: 10px;
}

.toolbar-row {
    flex: none;
    height: 26px;
    padding: 0 0 2px 3px;
    display: flex;
    background-color: #eceffb;
}

.toolbar {
    height: 24px;
    padding-left: 3px;
    display: flex;
    align-items: center;
    border-radius: 3px;
    background: linear-gradient(#f8f9fd, #e4e8f3 50%, #ccd2e4);
}

.toolbar button {
    position: relative;
    width: 22px;
    height: 22px;
}

.toolbar button.active {
    border: 1px solid #2a7fae;
    background: linear-gradient(#d8eef8, #8cc8e4);
}

.toolbar .off {
    color: #9aa2b4;
}

.toolbar button.active.off {
    border-color: #a0a8ac;
}

.toolbar button.drop {
    width: 29px;
    justify-content: flex-start;
    padding-left: 3px;
}

.drop::after {
    content: "";
    border: 3px solid transparent;
    border-top-color: currentColor;
    border-bottom: none;
}

.sep {
    width: 1px;
    height: 15px;
    margin: 0 3px 0 2px;
    background-color: #9ca4bc;
}

.toolbar button.overflow {
    width: 12px;
    height: 24px;
    margin-left: 1px;
    border-radius: 0 3px 3px 0;
    background: linear-gradient(#dde2ee, #b4bcd0);
    align-items: flex-end;
    padding-bottom: 2px;
}

.overflow::after {
    content: "";
    width: 6px;
    height: 6px;
    background: linear-gradient(#000, #000) 0 0 / 6px 1px no-repeat, linear-gradient(#000, #000) 1px 4px / 4px 1px no-repeat, linear-gradient(#000, #000) 2px 5px / 2px 1px no-repeat, linear-gradient(#000, #000) 0 3px / 6px 1px no-repeat;
}

/* columns */
.workspace {
    flex: 1;
    min-height: 0;
    display: grid;
    grid-template-columns: 250px minmax(0, 1fr) 200px;
    column-gap: 6px;
}

.navigator,
.center,
.taskbar {
    min-height: 0;
    display: flex;
    flex-direction: column;
}

.center {
    margin-right: -1px;
}

.panel-title {
    flex: none;
    height: 18px;
    margin-top: 1px;
    padding: 0 2px 0 3px;
    display: flex;
    align-items: center;
    background-color: #bfcddb;
}

.panel-title h2 {
    flex: 1;
    white-space: nowrap;
}

.panel-title button {
    width: 13px;
    height: 13px;
    background-color: #f0f0f0;
    border: 1px solid;
    border-color: #fff #666 #666 #fff;
}

.panel-title svg {
    width: 9px;
    height: 9px;
}

.box {
    flex: none;
    margin: 4px 6px 0 5px;
    border: 1px solid #c0c4d6;
    background-color: #f5f5f8;
}

.box.fill {
    flex: 1;
    min-height: 0;
    margin: 7px 6px 7px 5px;
    display: flex;
    flex-direction: column;
    background-color: #fff;
}

.box h3,
.group h3 {
    height: 15px;
    padding-left: 3px;
    line-height: 14px;
    color: #505a6c;
    border-bottom: 1px solid #c4c8da;
    background: linear-gradient(#f8f9fc, #d0d5e5);
}

.named-views {
    display: flex;
    align-items: center;
    gap: 4px;
    padding: 6px;
    padding-left: 3px;
}

.named-views button {
    width: 22px;
    height: 21px;
    border: 1px solid #aaa;
    background-color: #e1e1e1;
}

.combo {
    position: relative;
    flex: 1;
}

.combo select {
    width: 100%;
    height: 21px;
    padding: 0 2px;
    appearance: none;
    border: 1px solid #a8a8a8;
    border-radius: 0;
    background-color: #e1e1e1;
    color: #000;
    font: inherit;
}

.combo svg {
    position: absolute;
    right: 4px;
    top: 8px;
    width: 10px;
    height: 6px;
}

/* tree */
.tree {
    flex: 1;
    margin: 6px 4px 5px 5px;
    padding: 0 6px;
    border: 1px solid #828790;
    background-color: #fff;
}

.node {
    height: 16px;
    display: flex;
    align-items: center;
    gap: 2px;
    white-space: nowrap;
}

.node .icon {
    margin-right: 2px;
}

.tree ul {
    margin-left: 2px;
    background: repeating-linear-gradient(#888 0 1px, transparent 1px 2px) 4px 0 / 1px calc(100% - 8px) no-repeat;
}

.tree ul ul {
    margin-left: 19px;
}

.row {
    height: 16px;
    display: flex;
    align-items: center;
    gap: 8px;
    background: repeating-linear-gradient(90deg, #888 0 1px, transparent 1px 2px) 5px 8px / 11px 1px no-repeat;
}

.tree button.twig {
    width: 9px;
    height: 9px;
    border: 1px solid #919191;
    border-radius: 1px;
    background: linear-gradient(#2b4a9b, #2b4a9b) 1px 3px / 5px 1px no-repeat, linear-gradient(#2b4a9b, #2b4a9b) 3px 1px / 1px 5px no-repeat, #f4f4f4;
}

.tree button.expanded {
    background: linear-gradient(#2b4a9b, #2b4a9b) 1px 3px / 5px 1px no-repeat, #f4f4f4;
}

.leaf {
    width: 9px;
}

input[type="checkbox"],
input[type="radio"] {
    appearance: none;
    flex: none;
    width: 12px;
    height: 12px;
    margin: 0;
    border: 1px solid #444;
    background: linear-gradient(135deg, #e4e4e4, #fff);
    display: grid;
    place-items: center;
}

input[type="radio"] {
    border-radius: 50%;
}

input[type="radio"]:checked::before {
    content: "";
    width: 6px;
    height: 6px;
    border-radius: 50%;
    background-color: #444;
}

input[type="checkbox"]:checked::before {
    content: "";
    width: 10px;
    height: 10px;
    background-color: #555;
    clip-path: polygon(5% 45%, 20% 38%, 40% 62%, 82% 12%, 95% 22%, 42% 88%);
}

input.mixed::before {
    content: "";
    width: 6px;
    height: 6px;
    background-color: #bbb;
}

/* tabs */
.tabs {
    flex: none;
    height: 22px;
    display: flex;
    align-items: flex-start;
    padding-left: 3px;
    border-top: 1px solid #696969;
}

.tab {
    height: 19px;
    padding: 0 2px 0 3px;
    gap: 3px;
    border-bottom: 1px solid #696969;
    border-left: 1px solid #fff;
}

.center .tab:first-child {
    padding-left: 1px;
}

.tab.current {
    height: 22px;
    margin-top: -1px;
    padding: 0 6px 1px 3px;
    border-right: 2px solid #696969;
    border-bottom: 2px solid #696969;
    background-color: #f0f0f0;
}

/* viewport */
.viewport {
    flex: 1;
    min-height: 0;
    margin-bottom: 1px;
    padding: 7px 6px 6px 4px;
    display: flex;
    flex-direction: column;
    justify-content: space-between;
    border: 1px solid #808080;
    border-left-width: 2px;
    border-top-width: 2px;
    background-color: #fff;
    color: #000080;
    line-height: 14px;
    white-space: nowrap;
}

.scene {
    align-self: center;
    display: grid;
    margin: -10px 0 16px;
}

.scene > * {
    grid-area: 1 / 1;
    width: 712px;
    height: 680px;
}

.overlay {
    overflow: visible;
}

.callout path {
    fill: #4f7ccc;
    stroke: #fff;
    stroke-width: 2px;
}

.callout-text {
    fill: #fff;
    font-family: "Liberation Sans", Arial, sans-serif;
    font-size: 15px;
}

.axis {
    font-size: 11px;
    stroke-width: 3px;
}

.axis text {
    stroke: none;
}

/* task pane */
.groups {
    flex: 1;
    min-height: 0;
    margin-left: 1px;
    padding: 4px 3px 0 1px;
    display: flex;
    flex-direction: column;
    gap: 3px;
    background-color: #fff;
}

.group {
    flex: none;
    border: 1px solid #c5cae0;
    background-color: #fafafe;
    white-space: nowrap;
}

.group h3 {
    height: 17px;
    display: flex;
    align-items: center;
    justify-content: space-between;
    padding-right: 4px;
}

.group h3::after {
    content: "";
    border: 4px solid transparent;
    border-top-color: #848890;
    border-bottom: none;
}

.group a,
.group label {
    height: 19px;
    padding-left: 3px;
    display: flex;
    align-items: center;
    gap: 5px;
    color: #000;
}

.group .icon {
    color: #0878c8;
}

.group .selected {
    font-family: "DejaVu Sans Condensed", "DejaVu Sans", sans-serif;
    font-weight: bold;
}

.selected::after {
    content: "";
    margin: 0 4px 0 auto;
    border: 4px solid transparent;
    border-right-color: #101080;
    border-left: none;
}

.group input[type="checkbox"] {
    width: 14px;
    height: 14px;
    margin: 0 1px;
    border-color: #4a78c8;
    background: linear-gradient(135deg, #dcdcdc, #fff);
}

.group input[type="checkbox"]:checked::before {
    background-color: #108a10;
}

.group .combo {
    margin: 7px 7px 5px 6px;
}

.legend {
    height: 228px;
    padding: 5px 0 0 58px;
}

.legend-scale {
    display: flex;
    margin-top: 5px;
    gap: 3px;
}

.swatches {
    width: 40px;
    padding-top: 7px;
    display: flex;
    flex-direction: column;
    gap: 2px;
}

.swatches li {
    height: 12px;
    border: 1px solid #c5cae0;
}

.c1 { background-color: #bf0000; }
.c2 { background-color: #ff0000; }
.c3 { background-color: #ff8000; }
.c4 { background-color: #cfcf00; }
.c5 { background-color: #ffff00; }
.c6 { background-color: #00ff00; }
.c7 { background-color: #00e888; }
.c8 { background-color: #00f8f8; }
.c9 { background-color: #40b4ff; }
.c10 { background-color: #8080ff; }
.c11 { background-color: #0000e8; }

.values {
    width: 33px;
    line-height: 14px;
    text-align: right;
}

.legend table {
    margin-top: 4px;
    border-collapse: collapse;
    line-height: 13px;
}

.legend th,
.legend td {
    padding: 0;
    font-weight: normal;
    text-align: left;
}

.legend th {
    width: 37px;
}

.legend td:last-child {
    width: 37px;
    text-align: right;
}

.taskbar .tabs {
    padding-left: 0;
}

.taskbar .tab.current {
    padding: 0 4px 1px 3px;
}

.tab.boxed {
    margin: 0 0 0 1px;
    border: 1px solid #696969;
    padding: 0 2px;
    gap: 2px;
}

/* status bar */
.statusbar {
    flex: none;
    height: 22px;
    display: flex;
    align-items: stretch;
    line-height: 22px;
    padding-left: 3px;
    border-top: 1px solid #d7d7d7;
}

.message {
    flex: 1;
}

.cell {
    width: 72px;
    border-left: 1px solid #d7d7d7;
}

.cell.tiny {
    width: 10px;
}

.cell.small {
    width: 60px;
}

.cell:nth-child(3) {
    width: 81px;
}

.cell:last-child {
    width: 85px;
    background: repeating-linear-gradient(135deg, transparent 0 2px, #bbb 2px 3px) right bottom / 9px 9px no-repeat;
}
```
FILE: script.js
```
var canvas = document.getElementById("building");
var ctx = canvas.getContext("2d");
ctx.translate(-270, -110);

function rgb(hex) {
    return [1, 3, 5].map(i => parseInt(hex.substr(i, 2), 16));
}

function mix(a, b, t) {
    return a + (b - a) * t;
}

// fills a polygon line by line, the colour stops move between the key rows
function shade(points, rows) {
    ctx.save();
    ctx.beginPath();
    points.forEach(p => ctx.lineTo(p[0], p[1]));
    ctx.clip();
    for (let k = 0; k < rows.length - 1; k++) {
        const a = rows[k], b = rows[k + 1];
        for (let y = a.y; y < b.y; y++) {
            const t = (y - a.y) / (b.y - a.y);
            const grad = ctx.createLinearGradient(380, 0, 880, 0);
            a.stops.forEach((s, i) => {
                const e = b.stops[i];
                const c1 = rgb(s[1]), c2 = rgb(e[1]);
                const c = c1.map((v, n) => Math.round(mix(v, c2[n], t)));
                grad.addColorStop((mix(s[0], e[0], t) - 380) / 500, "rgb(" + c.join(",") + ")");
            });
            ctx.fillStyle = grad;
            ctx.fillRect(380, y, 500, 1);
        }
    }
    ctx.restore();
}

// frayed mesh cells on a roof edge
function fringe(x1, y1, x2, y2, count, size, colors) {
    for (let i = 0; i < count; i++) {
        const x = mix(x1, x2, i / count), y = mix(y1, y2, i / count);
        const nx = mix(x1, x2, (i + 1) / count), ny = mix(y1, y2, (i + 1) / count);
        ctx.fillStyle = colors[i % colors.length];
        ctx.beginPath();
        ctx.moveTo(x, y - 1);
        ctx.quadraticCurveTo((x + nx) / 2 - 1, (y + ny) / 2 - 4, nx, ny - 1);
        ctx.lineTo(nx, ny + 1);
        ctx.lineTo(mix(x, nx, .7), (y + ny) / 2 + size * (i % 3 + 1) / 3);
        ctx.lineTo(x, y + 1);
        ctx.fill();
    }
}

// inner walls
shade([[413, 265], [535, 139], [538, 139], [538, 266], [413, 268]], [
    { y: 130, stops: [[410, "#20f0f8"], [500, "#50d8ff"], [528, "#68c4ff"], [529, "#78c8ff"], [538, "#80d0ff"]] },
    { y: 200, stops: [[420, "#20f0f8"], [490, "#50d0ff"], [529, "#6cbcff"], [530, "#78c8ff"], [538, "#78c8ff"]] },
    { y: 270, stops: [[425, "#20f4ff"], [485, "#60ccff"], [529, "#74b8ff"], [530, "#78c8ff"], [538, "#78c8ff"]] }
]);
shade([[537, 141], [857, 126], [744, 252], [537, 264]], [
    { y: 120, stops: [[537, "#60e8ff"], [640, "#10fcff"], [690, "#00ffe8"], [760, "#00ff40"], [790, "#10ff00"], [840, "#60f820"]] },
    { y: 142, stops: [[537, "#74e0ff"], [630, "#20f8ff"], [710, "#00ffe8"], [760, "#00ff50"], [795, "#10ff00"], [835, "#f0ff00"]] },
    { y: 160, stops: [[537, "#80e0ff"], [640, "#30f4ff"], [725, "#00fff0"], [780, "#00ffa0"], [810, "#40ff20"], [835, "#80ff00"]] },
    { y: 200, stops: [[537, "#88e0ff"], [640, "#60e8ff"], [735, "#10fcff"], [770, "#00fff8"], [800, "#00fff8"], [835, "#00ffff"]] },
    { y: 266, stops: [[537, "#90e0ff"], [640, "#88e0ff"], [720, "#70e8ff"], [770, "#40f0ff"], [800, "#40f0ff"], [835, "#40f0ff"]] }
]);

// windward wall
shade([[410, 770], [410, 274], [414, 263], [433, 266], [733, 252], [745, 249], [745, 400], [737, 756]], [
    { y: 248, stops: [[410, "#f02000"], [412, "#ff4000"], [418, "#ff9000"], [432, "#f0e000"], [500, "#f0f000"], [600, "#d8ff00"], [640, "#a0ff00"], [683, "#00ff20"], [700, "#00ff90"], [716, "#00fff0"], [728, "#40e0ff"], [732, "#3060ff"], [734, "#0000f0"], [741, "#0000f0"], [745, "#8080ff"]] },
    { y: 310, stops: [[410, "#e80000"], [427, "#ff0000"], [438, "#ff8000"], [452, "#ffd800"], [515, "#f4f000"], [610, "#ffff00"], [647, "#d8ff00"], [683, "#00ff10"], [697, "#00ff78"], [712, "#00fff0"], [728, "#38e8ff"], [732, "#3060ff"], [734, "#0000ff"], [741, "#0000f0"], [745, "#68b0ff"]] },
    { y: 420, stops: [[410, "#f00000"], [429, "#ff0000"], [440, "#ff8000"], [456, "#ffd800"], [530, "#f0f000"], [612, "#ffff00"], [642, "#d8ff00"], [673, "#00ff10"], [690, "#00ff70"], [708, "#00fff0"], [728, "#38e8ff"], [733, "#3060ff"], [735, "#0000ff"], [740, "#0000f0"], [744, "#60b8ff"]] },
    { y: 577, stops: [[410, "#f80000"], [421, "#ff0000"], [434, "#ff8000"], [452, "#ffd800"], [515, "#f0f000"], [597, "#ffff00"], [632, "#d8ff00"], [662, "#00ff00"], [684, "#00ff70"], [706, "#00fff0"], [728, "#20f8ff"], [733, "#4080ff"], [736, "#0000ff"], [739, "#0000f8"], [743, "#40d8ff"]] },
    { y: 663, stops: [[406, "#ff0000"], [413, "#ff1000"], [425, "#ff8000"], [442, "#ffd800"], [505, "#f0f000"], [590, "#ffff00"], [626, "#d8ff00"], [660, "#00ff00"], [684, "#00ff70"], [706, "#00fff0"], [728, "#20f8ff"], [733, "#4090ff"], [736, "#3020f8"], [739, "#4040ff"], [743, "#20e8ff"]] },
    { y: 772, stops: [[390, "#ff0000"], [397, "#ff2000"], [410, "#ff8c00"], [430, "#ffd000"], [495, "#f0f000"], [580, "#ffff00"], [622, "#d0ff00"], [650, "#00ff00"], [682, "#00ff70"], [704, "#00fff0"], [726, "#20f8ff"], [732, "#80c8ff"], [735, "#a090f0"], [738, "#b090f0"], [743, "#20e8ff"]] }
]);

// side wall
shade([[743, 249], [857, 124], [858, 560], [859, 629], [737, 756], [741, 500]], [
    { y: 120, stops: [[742, "#70b0ff"], [800, "#6cb8ff"], [835, "#5890ff"], [850, "#7888ff"], [858, "#50c0ff"]] },
    { y: 165, stops: [[742, "#70b0ff"], [800, "#6cb8ff"], [820, "#60a8ff"], [840, "#64c0ff"], [858, "#50d8ff"]] },
    { y: 310, stops: [[742, "#74b4ff"], [755, "#6cc0ff"], [800, "#64c4ff"], [840, "#5cd0ff"], [858, "#40e8ff"]] },
    { y: 430, stops: [[740, "#60b4ff"], [750, "#64c4ff"], [790, "#54d8ff"], [820, "#44ecff"], [858, "#28f4ff"]] },
    { y: 570, stops: [[738, "#5cb8ff"], [744, "#48e4ff"], [780, "#30f0ff"], [820, "#20f4ff"], [858, "#00fcff"]] },
    { y: 700, stops: [[736, "#a090f8"], [742, "#20f0ff"], [760, "#00f8ff"], [820, "#00ffff"], [858, "#00ffff"]] },
    { y: 757, stops: [[736, "#b090f0"], [741, "#40e0ff"], [750, "#00ffff"], [820, "#00ffff"], [858, "#00ffff"]] }
]);

fringe(414, 265, 535, 142, 18, 3, ["#20e8c8", "#38e0f8", "#20d8b0"]);
fringe(535, 142, 740, 134, 18, 2, ["#50c8ff", "#30e0f8", "#58b8ff"]);
fringe(740, 134, 857, 127, 10, 4, ["#40c8f0", "#20e890", "#58a8ff"]);
fringe(416, 267, 660, 259, 24, 5, ["#10e070", "#20e8c8", "#40f030", "#20d8a8"]);
fringe(660, 259, 735, 252, 8, 3, ["#20e8e0", "#10f0a0", "#38d8ff"]);
fringe(738, 252, 857, 127, 16, 2, ["#40d0ff", "#6088ff", "#38e8ff"]);
```
